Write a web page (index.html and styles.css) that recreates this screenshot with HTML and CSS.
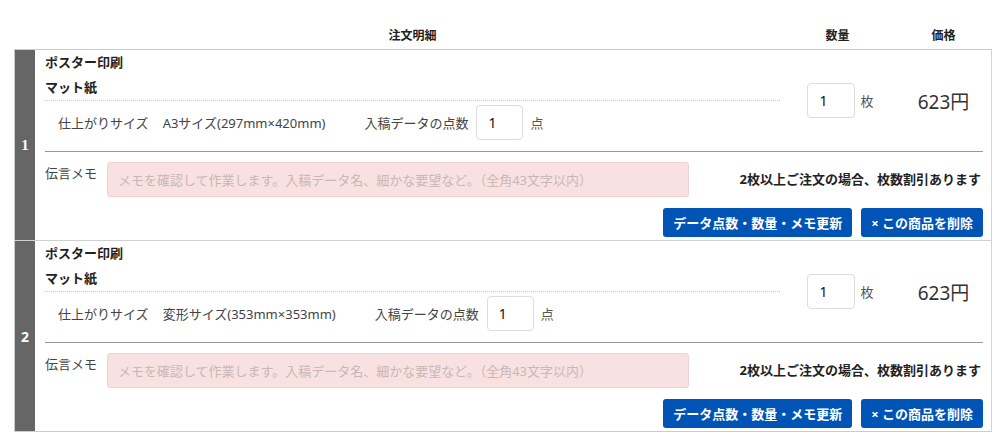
FILE: index.html
```html
<!DOCTYPE html>
<html lang="ja">
<head>
    <meta charset="UTF-8">
    <meta name="viewport" content="width=device-width, initial-scale=1.0">
    <title>カート</title>
    <link rel="stylesheet" href="styles.css">
</head>
<body>
    <div class="cart">
        <div class="cart-head">
            <div class="col-spec">注文明細</div>
            <div class="col-qty">数量</div>
            <div class="col-price">価格</div>
        </div>

        <div class="cart-list">
            <!-- item 1 -->
            <div class="item">
                <div class="item-no">1</div>
                <div class="item-body">
                    <div class="item-top">
                        <div class="col-spec spec">
                            <div class="spec-title">ポスター印刷</div>
                            <div class="spec-title">マット紙</div>
                            <div class="spec-size">
                                <span class="size-label">仕上がりサイズ</span>
                                <span class="size-value">A3サイズ(297mm×420mm)</span>
                                <span class="data-label">入稿データの点数</span>
                                <input class="num-input" type="text" value="1">
                                <span class="unit">点</span>
                            </div>
                        </div>
                        <div class="col-qty qty">
                            <input class="num-input" type="text" value="1">
                            <span class="unit">枚</span>
                        </div>
                        <div class="col-price price">623円</div>
                    </div>
                    <div class="item-memo">
                        <span class="memo-label">伝言メモ</span>
                        <textarea class="memo" placeholder="メモを確認して作業します。入稿データ名、細かな要望など。（全角43文字以内）"></textarea>
                        <span class="note">2枚以上ご注文の場合、枚数割引あります</span>
                    </div>
                    <div class="item-actions">
                        <button class="btn">データ点数・数量・メモ更新</button>
                        <button class="btn">× この商品を削除</button>
                    </div>
                </div>
            </div>

            <!-- item 2 -->
            <div class="item">
                <div class="item-no alt">2</div>
                <div class="item-body">
                    <div class="item-top">
                        <div class="col-spec spec">
                            <div class="spec-title">ポスター印刷</div>
                            <div class="spec-title">マット紙</div>
                            <div class="spec-size">
                                <span class="size-label">仕上がりサイズ</span>
                                <span class="size-value">変形サイズ(353mm×353mm)</span>
                                <span class="data-label">入稿データの点数</span>
                                <input class="num-input" type="text" value="1">
                                <span class="unit">点</span>
                            </div>
                        </div>
                        <div class="col-qty qty">
                            <input class="num-input" type="text" value="1">
                            <span class="unit">枚</span>
                        </div>
                        <div class="col-price price">623円</div>
                    </div>
                    <div class="item-memo">
                        <span class="memo-label">伝言メモ</span>
                        <textarea class="memo" placeholder="メモを確認して作業します。入稿データ名、細かな要望など。（全角43文字以内）"></textarea>
                        <span class="note">2枚以上ご注文の場合、枚数割引あります</span>
                    </div>
                    <div class="item-actions">
                        <button class="btn">データ点数・数量・メモ更新</button>
                        <button class="btn">× この商品を削除</button>
                    </div>
                </div>
            </div>
        </div>
    </div>
</body>
</html>
```

FILE: styles.css
```css
body {
    margin: 0;
    padding: 0;
    background-color: #fff;
    color: #333;
    font-family: "Noto Sans", "Noto Sans CJK JP", sans-serif;
    font-size: 13px;
}
.cart {
    width: 978px;
    margin: 23px 0 0 14px;
}
.cart-head {
    display: flex;
    height: 26px;
    line-height: 26px;
    padding-left: 31px;
    font-size: 12px;
    font-weight: bold;
    color: #222;
}
.col-spec {
    width: 735px;
    flex: none;
}
.col-qty {
    width: 115px;
    flex: none;
}
.col-price {
    flex: 1;
}
.cart-head div {
    text-align: center;
}
.cart-list {
    border: 1px solid #ccc;
    border-right-color: #d4d4d4;
}
.item {
    display: flex;
    border-bottom: 1px solid #d0d0d0;
}
.item:last-child {
    border-bottom: none;
}
.item-no {
    width: 20px;
    flex: none;
    background-color: #666;
    color: #fff;
    font-family: "Liberation Serif", serif;
    font-weight: bold;
    font-size: 15px;
    display: flex;
    align-items: center;
    justify-content: center;
}
.item-no.alt {
    font-family: "Noto Sans", sans-serif;
    font-size: 14px;
}
.item-body {
    flex: 1;
    padding: 0 8px 3px 10px;
}
.item-top {
    display: flex;
    align-items: center;
    border-bottom: 1px solid #999;
}
.spec {
    padding-top: 2px;
}
.spec-title {
    font-weight: bold;
    line-height: 20px;
    margin-bottom: 5px;
    color: #222;
}
.spec-title + .spec-title {
    margin-bottom: 0;
    padding-bottom: 3px;
    border-bottom: 1px dotted #c8c8c8;
}
.spec-size {
    display: flex;
    align-items: center;
    padding: 4px 0 11px 13px;
    color: #444;
}
.size-label {
    margin-right: 14px;
}
.size-value {
    margin-right: 39px;
}
.data-label {
    margin-right: 8px;
}
.num-input {
    width: 47px;
    height: 35px;
    box-sizing: border-box;
    border: 1px solid #ddd;
    border-radius: 4px;
    padding: 0 11px;
    font-family: "Noto Sans", sans-serif;
    font-size: 14px;
    color: #111;
    background: #fff;
}
.unit {
    margin-left: 7px;
    color: #555;
}
.qty {
    display: flex;
    align-items: center;
    justify-content: center;
    padding: 0 0 1px 3px;
}
.qty .num-input {
    width: 48px;
}
.qty .unit {
    margin-left: 5px;
}
.price {
    text-align: center;
    font-size: 19px;
    color: #333;
    padding-left: 6px;
}
.item-memo {
    display: flex;
    align-items: flex-start;
    padding-top: 10px;
}
.memo-label {
    width: 62px;
    flex: none;
    line-height: 22px;
    color: #444;
}
.memo {
    width: 582px;
    height: 35px;
    flex: none;
    box-sizing: border-box;
    resize: none;
    margin: 0;
    padding: 7px 10px;
    background-color: #f9e1e1;
    border: 1px solid #f2d3d3;
    border-radius: 3px;
    font-family: "Noto Sans", "Noto Sans CJK JP", sans-serif;
    font-size: 13px;
}
.memo::placeholder {
    color: #c9b6b6;
}
.note {
    flex: 1;
    text-align: right;
    font-weight: bold;
    line-height: 35px;
    color: #222;
    padding-right: 2px;
}
.item-actions {
    display: flex;
    justify-content: flex-end;
    gap: 9px;
    padding-top: 11px;
}
.btn {
    height: 29px;
    padding: 0 10px;
    border: none;
    border-radius: 3px;
    background-color: #0054b6;
    color: #fff;
    font-family: "Noto Sans", "Noto Sans CJK JP", sans-serif;
    font-size: 13px;
    font-weight: bold;
    cursor: pointer;
}
```
